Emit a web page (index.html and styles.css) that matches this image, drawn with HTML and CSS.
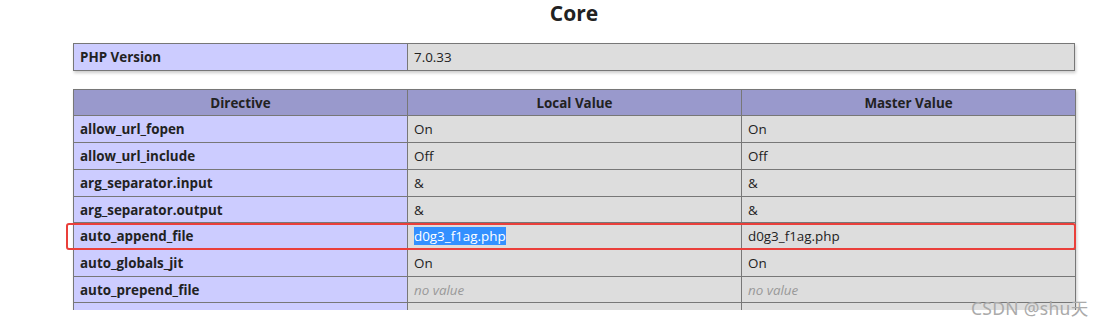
FILE: index.html
```html
<!DOCTYPE html>
<html>
<head>
<meta charset="utf-8">
<link rel="stylesheet" href="styles.css">
</head>
<body>
<div class="viewport">
  <div class="page">
    <h2 class="title">Core</h2>
    <table class="info info-version">
      <colgroup><col class="c-e"><col></colgroup>
      <tr><td class="e">PHP Version</td><td class="v">7.0.33</td></tr>
    </table>
    <table class="info info-directives">
      <colgroup><col class="c-e"><col class="c-v"><col class="c-v"></colgroup>
      <tr class="h"><th>Directive</th><th>Local Value</th><th>Master Value</th></tr>
      <tr><td class="e">allow_url_fopen</td><td class="v">On</td><td class="v">On</td></tr>
      <tr><td class="e">allow_url_include</td><td class="v">Off</td><td class="v">Off</td></tr>
      <tr><td class="e">arg_separator.input</td><td class="v">&amp;</td><td class="v">&amp;</td></tr>
      <tr><td class="e">arg_separator.output</td><td class="v">&amp;</td><td class="v">&amp;</td></tr>
      <tr><td class="e">auto_append_file</td><td class="v"><span class="selected">d0g3_f1ag.php</span></td><td class="v">d0g3_f1ag.php</td></tr>
      <tr><td class="e">auto_globals_jit</td><td class="v">On</td><td class="v">On</td></tr>
      <tr><td class="e">auto_prepend_file</td><td class="v"><i>no value</i></td><td class="v"><i>no value</i></td></tr>
      <tr class="partial"><td class="e"></td><td class="v"></td><td class="v"></td></tr>
    </table>
    <div class="mark"></div>
  </div>
</div>
<div class="watermark">CSDN @shu天</div>
</body>
</html>
```

FILE: styles.css
```css
html, body {
  margin: 0;
  padding: 0;
  background: #fff;
}
body {
  font-family: "Open Sans", "Noto Sans CJK SC", sans-serif;
  color: #222;
  position: relative;
  width: 1111px;
  height: 325px;
  overflow: hidden;
}
.viewport {
  height: 310px;
  overflow: hidden;
}
.page {
  position: relative;
  width: 1002px;
  margin-left: 73px;
}
.title {
  margin: 0;
  padding-top: 0;
  font-size: 21px;
  line-height: 26px;
  font-weight: bold;
  text-align: center;
}
.info {
  border-collapse: collapse;
  table-layout: fixed;
  width: 1002px;
  box-shadow: 1px 2px 3px #ccc;
}
.info-version {
  margin-top: 17px;
}
.info-directives {
  margin-top: 18px;
}
.c-e, .c-v {
  width: 334px;
}
.info td, .info th {
  border: 1px solid #777;
  font-size: 13.4px;
  line-height: 17.7px;
  padding: 5px 6px 3px;
  text-align: left;
  vertical-align: baseline;
  white-space: nowrap;
  overflow: hidden;
}
.partial td {
  height: 17.7px;
}
.e {
  background: #ccf;
  font-weight: bold;
}
.v {
  background: #ddd;
}
.v i {
  color: #999;
}
.h th {
  background: #99c;
  font-weight: bold;
  text-align: center;
}
.selected {
  background: #3390ff;
  color: #fff;
}
.mark {
  position: absolute;
  left: -7px;
  top: 223px;
  width: 1006px;
  height: 23px;
  border: 2px solid #ea3f3a;
  border-radius: 3px;
}
.watermark {
  position: absolute;
  left: 971px;
  top: 295px;
  font-size: 17.5px;
  letter-spacing: 0.3px;
  color: #aaa;
  font-family: "Noto Sans", "Noto Sans CJK SC", sans-serif;
}
```
